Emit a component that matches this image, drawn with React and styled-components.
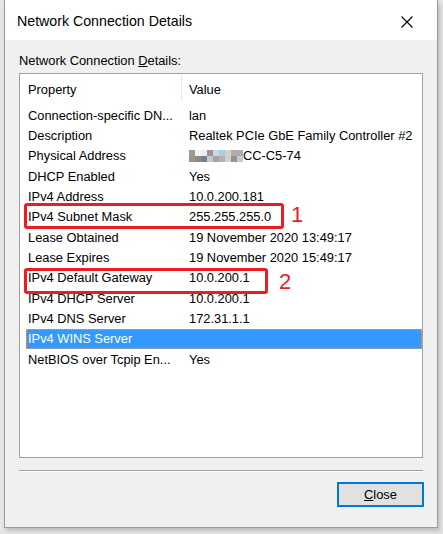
import React from "react";
import styled, { createGlobalStyle } from "styled-components";

const Global = createGlobalStyle`
  html, body { margin: 0; padding: 0; }
  body {
    background: #e6e6e6;
    font-family: "Liberation Sans", Arial, sans-serif;
    width: 443px;
    height: 534px;
    overflow: hidden;
  }
`;

const Page = styled.div`
  width: 443px;
  height: 534px;
  padding-left: 4px;
  box-sizing: border-box;
`;

const Window = styled.div`
  width: 434px;
  height: 528px;
  box-sizing: border-box;
  border: 1px solid #9a9a9a;
  border-top: none;
  background: #f0f0f0;
  display: flex;
  flex-direction: column;
  box-shadow: 2px 3px 4px rgba(0, 0, 0, 0.18);
`;

const TitleBar = styled.div`
  height: 40px;
  background: #ffffff;
  display: flex;
  align-items: center;
  justify-content: space-between;
  padding: 0 24px 0 12px;
  flex-shrink: 0;
`;

const Title = styled.div`
  font-size: 14.2px;
  color: #000;
  padding-top: 2px;
`;

const CloseX = styled.svg`
  width: 12px;
  height: 12px;
  display: block;
  margin-top: 4px;
`;

const Body = styled.div`
  flex: 1;
  display: flex;
  flex-direction: column;
  padding: 13px 14px 0 14px;
`;

const Label = styled.div`
  font-size: 12.85px;
  color: #000;
  height: 20px;
  line-height: 15px;
  u { text-decoration: underline; text-underline-offset: 1px; }
`;

const List = styled.div`
  position: relative;
  height: 385px;
  box-sizing: border-box;
  border: 1px solid #a0a0a0;
  background: #ffffff;
  font-size: 12.85px;
  color: #000;
`;

const Header = styled.div`
  display: grid;
  grid-template-columns: 161px 1px 1fr;
  height: 31px;
  align-items: center;
`;

const HeaderCell = styled.div`
  padding-left: ${(p) => p.$pad}px;
  line-height: 15px;
`;

const HeaderDivider = styled.div`
  width: 1px;
  height: 26px;
  align-self: start;
  margin-top: 1px;
  background: #e5e5e5;
`;

const Rows = styled.div`
  display: flex;
  flex-direction: column;
  padding-left: 6px;
`;

const Row = styled.div`
  display: grid;
  grid-template-columns: 161px 1fr;
  height: 20.33px;
  align-items: center;
  box-sizing: border-box;
  white-space: nowrap;
  background: ${(p) => (p.$selected ? "#3399ff" : "transparent")};
  color: ${(p) => (p.$selected ? "#ffffff" : "#000000")};
  outline: ${(p) => (p.$selected ? "1px dotted #e8a05a" : "none")};
  outline-offset: -1px;
`;

const Cell = styled.div`
  padding-left: 2px;
  line-height: 15px;
  display: flex;
  align-items: center;
`;

const Blur = styled.svg`
  width: 54px;
  height: 12px;
  display: block;
`;

const Mark = styled.div`
  position: absolute;
  left: ${(p) => p.$x}px;
  top: ${(p) => p.$y}px;
  width: ${(p) => p.$w}px;
  height: ${(p) => p.$h}px;
  box-sizing: border-box;
  border: 3px solid #ec1c24;
  border-radius: 3px;
  pointer-events: none;
`;

const Num = styled.div`
  position: absolute;
  left: ${(p) => p.$x}px;
  top: ${(p) => p.$y}px;
  font-size: 22px;
  line-height: 22px;
  color: #ec1c24;
  font-family: "Liberation Sans", Arial, sans-serif;
`;

const Separator = styled.div`
  margin-top: 12px;
  height: 1px;
  background: #a0a0a0;
  border-bottom: 1px solid #ffffff;
`;

const Footer = styled.div`
  display: flex;
  justify-content: flex-end;
  padding-top: 10px;
`;

const Button = styled.button`
  width: 87px;
  height: 25px;
  box-sizing: border-box;
  border: 2px solid #0078d7;
  background: #e1e1e1;
  font-family: "Liberation Sans", Arial, sans-serif;
  font-size: 12.85px;
  color: #000;
  padding: 0;
  margin-right: -1px;
  u { text-decoration: underline; text-underline-offset: 1px; }
`;

const blurColors = [
  ["#9a9a9a", "#f4f4f4", "#ececec", "#a28e98", "#c9d6e4", "#a9c9ea", "#d2d2d2", "#b9aaa2", "#a9a9c0"],
  ["#a39189", "#8b8b8b", "#74828f", "#c2cad2", "#a3a3a3", "#bab2aa", "#d0d0d0", "#9a9292", "#c9c9d2"],
];

const data = [
  ["Connection-specific DN...", "lan"],
  ["Description", "Realtek PCIe GbE Family Controller #2"],
  ["Physical Address", "CC-C5-74", true],
  ["DHCP Enabled", "Yes"],
  ["IPv4 Address", "10.0.200.181"],
  ["IPv4 Subnet Mask", "255.255.255.0"],
  ["Lease Obtained", "19 November 2020 13:49:17"],
  ["Lease Expires", "19 November 2020 15:49:17"],
  ["IPv4 Default Gateway", "10.0.200.1"],
  ["IPv4 DHCP Server", "10.0.200.1"],
  ["IPv4 DNS Server", "172.31.1.1"],
  ["IPv4 WINS Server", "", false, true],
  ["NetBIOS over Tcpip En...", "Yes"],
];

export default function App() {
  return (
    <>
      <Global />
      <Page>
        <Window>
          <TitleBar>
            <Title>Network Connection Details</Title>
            <CloseX viewBox="0 0 12 12">
              <path d="M0.5 0.5 L11.5 11.5 M11.5 0.5 L0.5 11.5" stroke="#000" strokeWidth="1.1" fill="none" />
            </CloseX>
          </TitleBar>
          <Body>
            <Label>
              Network Connection <u>D</u>etails:
            </Label>
            <List>
              <Header>
                <HeaderCell $pad={8}>Property</HeaderCell>
                <HeaderDivider />
                <HeaderCell $pad={7}>Value</HeaderCell>
              </Header>
              <Rows>
                {data.map(([k, v, blur, sel]) => (
                  <Row key={k} $selected={sel}>
                    <Cell>{k}</Cell>
                    <Cell>
                      {blur && (
                        <Blur viewBox="0 0 54 12">
                          {blurColors.map((row, r) =>
                            row.map((c, i) => (
                              <rect key={`${r}-${i}`} x={i * 6} y={r * 6} width="6" height="6" fill={c} />
                            ))
                          )}
                        </Blur>
                      )}
                      {v}
                    </Cell>
                  </Row>
                ))}
              </Rows>
              <Mark $x={4} $y={129} $w={260} $h={26} />
              <Num $x={271} $y={130}>1</Num>
              <Mark $x={4} $y={194} $w={244} $h={26} />
              <Num $x={259} $y={197}>2</Num>
            </List>
            <Separator />
            <Footer>
              <Button>
                <u>C</u>lose
              </Button>
            </Footer>
          </Body>
        </Window>
      </Page>
    </>
  );
}
